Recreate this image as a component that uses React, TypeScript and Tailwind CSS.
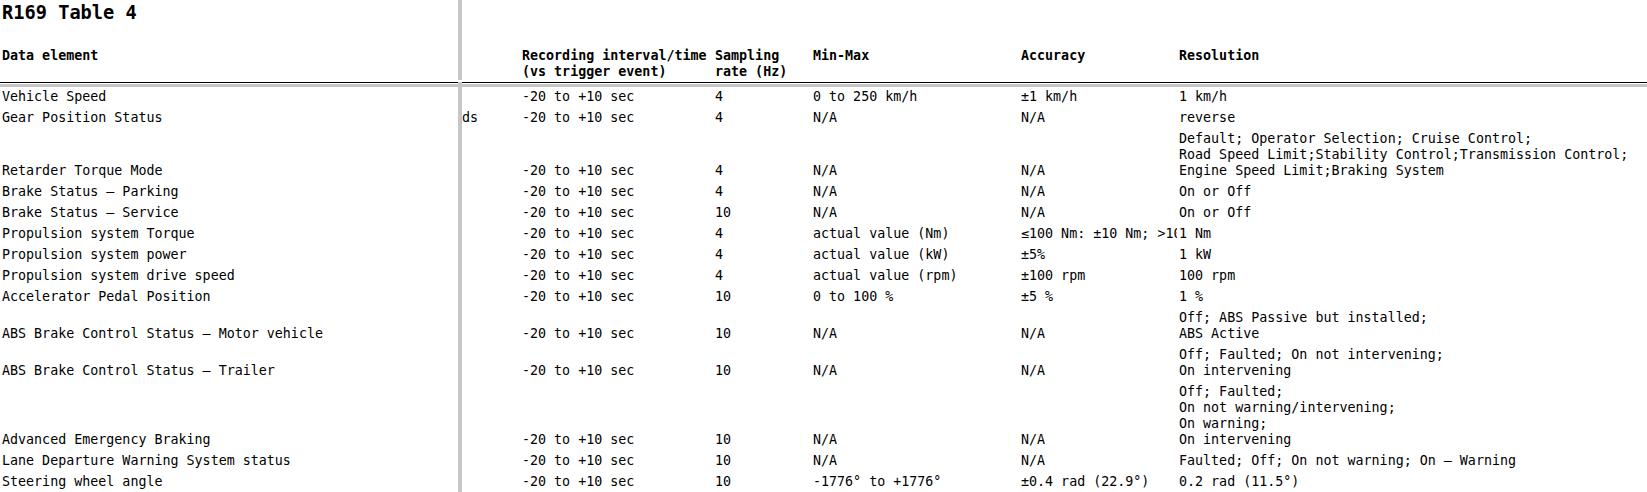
import React from "react";

type Item = {
  name: string;
  extra?: string;
  interval: string;
  rate: string;
  range: string;
  accuracy: string;
  resolution: string;
};

const rows: Item[] = [
  { name: "Vehicle Speed", interval: "-20 to +10 sec", rate: "4", range: "0 to 250 km/h", accuracy: "±1 km/h", resolution: "1 km/h" },
  { name: "Gear Position Status", extra: "ds", interval: "-20 to +10 sec", rate: "4", range: "N/A", accuracy: "N/A", resolution: "reverse" },
  {
    name: "Retarder Torque Mode",
    interval: "-20 to +10 sec",
    rate: "4",
    range: "N/A",
    accuracy: "N/A",
    resolution:
      "Default; Operator Selection; Cruise Control;\nRoad Speed Limit;Stability Control;Transmission Control;\nEngine Speed Limit;Braking System",
  },
  { name: "Brake Status – Parking", interval: "-20 to +10 sec", rate: "4", range: "N/A", accuracy: "N/A", resolution: "On or Off" },
  { name: "Brake Status – Service", interval: "-20 to +10 sec", rate: "10", range: "N/A", accuracy: "N/A", resolution: "On or Off" },
  { name: "Propulsion system Torque", interval: "-20 to +10 sec", rate: "4", range: "actual value (Nm)", accuracy: "≤100 Nm: ±10 Nm; >100 Nm: ±10%", resolution: "1 Nm" },
  { name: "Propulsion system power", interval: "-20 to +10 sec", rate: "4", range: "actual value (kW)", accuracy: "±5%", resolution: "1 kW" },
  { name: "Propulsion system drive speed", interval: "-20 to +10 sec", rate: "4", range: "actual value (rpm)", accuracy: "±100 rpm", resolution: "100 rpm" },
  { name: "Accelerator Pedal Position", interval: "-20 to +10 sec", rate: "10", range: "0 to 100 %", accuracy: "±5 %", resolution: "1 %" },
  { name: "ABS Brake Control Status – Motor vehicle", interval: "-20 to +10 sec", rate: "10", range: "N/A", accuracy: "N/A", resolution: "Off; ABS Passive but installed;\nABS Active" },
  { name: "ABS Brake Control Status – Trailer", interval: "-20 to +10 sec", rate: "10", range: "N/A", accuracy: "N/A", resolution: "Off; Faulted; On not intervening;\nOn intervening" },
  {
    name: "Advanced Emergency Braking",
    interval: "-20 to +10 sec",
    rate: "10",
    range: "N/A",
    accuracy: "N/A",
    resolution: "Off; Faulted;\nOn not warning/intervening;\nOn warning;\nOn intervening",
  },
  { name: "Lane Departure Warning System status", interval: "-20 to +10 sec", rate: "10", range: "N/A", accuracy: "N/A", resolution: "Faulted; Off; On not warning; On – Warning" },
  { name: "Steering wheel angle", interval: "-20 to +10 sec", rate: "10", range: "-1776° to +1776°", accuracy: "±0.4 rad (22.9°)", resolution: "0.2 rad (11.5°)" },
];

// frozen column | freeze bar | hidden col | interval | rate | min-max | accuracy | resolution
const grid = "grid grid-cols-[458px_4px_58px_193px_98px_208px_158px_1fr]";
const cell = "pl-[2px] whitespace-nowrap overflow-hidden";

function Freeze() {
  return <div className="bg-[#c6c6c6] self-stretch" />;
}

export default function App() {
  return (
    <div
      className="bg-white text-black text-[13.33px] leading-[16px] w-[1647px] min-h-[492px]"
      style={{ fontFamily: '"DejaVu Sans Mono", "Liberation Mono", monospace' }}
    >
      {/* title */}
      <div className={`${grid} h-[48px]`}>
        <div className="pl-[2px] pt-[2px] text-[18.67px] leading-[22px] font-bold">R169 Table 4</div>
        <Freeze />
        <div className="col-span-6" />
      </div>

      {/* header */}
      <div className={`${grid} pb-[2px] font-bold items-start`}>
        <div className={cell}>Data element</div>
        <Freeze />
        <div />
        <div className="pl-[2px] whitespace-pre">{"Recording interval/time\n(vs trigger event)"}</div>
        <div className="pl-[2px] whitespace-pre">{"Sampling\nrate (Hz)"}</div>
        <div className={cell}>Min-Max</div>
        <div className={cell}>Accuracy</div>
        <div className={cell}>Resolution</div>
      </div>

      {/* header rule + freeze line */}
      <div className={`${grid} h-px`}>
        <div className="bg-black" />
        <Freeze />
        <div className="col-span-6 bg-black" />
      </div>
      <div className={`${grid} h-px`}>
        <div />
        <Freeze />
        <div className="col-span-6" />
      </div>
      <div className="h-[3px] bg-[#c6c6c6]" />

      {/* body */}
      {rows.map((r) => (
        <div key={r.name} className={`${grid} items-end pt-[1.5px] pb-[3.5px]`}>
          <div className={cell}>{r.name}</div>
          <div className="bg-[#c6c6c6] self-stretch -mt-[1.5px] -mb-[3.5px]" />
          <div className="whitespace-nowrap overflow-hidden">{r.extra ?? ""}</div>
          <div className={cell}>{r.interval}</div>
          <div className={cell}>{r.rate}</div>
          <div className={cell}>{r.range}</div>
          <div className={cell}>{r.accuracy}</div>
          <div className="pl-[2px] whitespace-pre">{r.resolution}</div>
        </div>
      ))}
    </div>
  );
}
